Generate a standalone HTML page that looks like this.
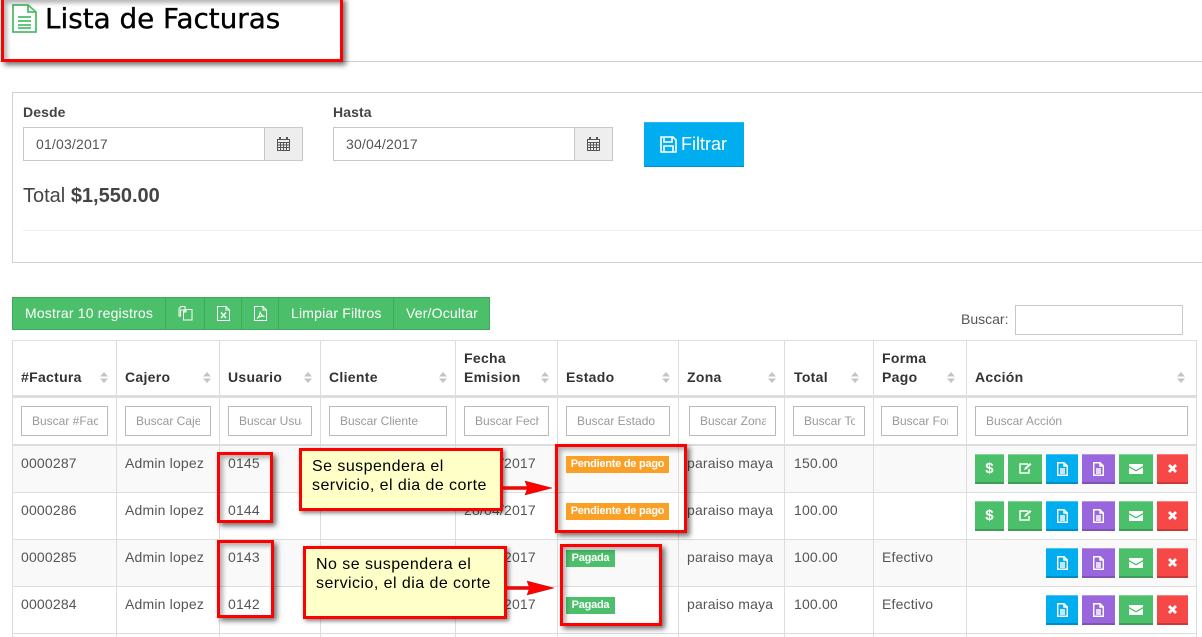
<!DOCTYPE html>
<html lang="es"><head><meta charset="utf-8"><title>Lista de Facturas</title>
<style>
html,body{margin:0;padding:0;background:#fff}
#p{position:relative;width:1202px;height:637px;overflow:hidden;font-family:"Liberation Sans",sans-serif;font-size:14px;color:#555;background:#fff}
#p div,#p svg{position:absolute;box-sizing:border-box}
.t{white-space:nowrap;line-height:16px;letter-spacing:.18px}
.th{font-weight:bold;color:#333;letter-spacing:.3px;white-space:nowrap;line-height:19px}
.v{background:#ddd;width:1px;top:340px;height:297px}
.h{background:#ddd;left:12px;width:1185px}
.f{top:406px;height:30px;border:1px solid #bbb;background:#fff;color:#999;font-size:12px;line-height:28px;padding-left:10px;overflow:hidden;white-space:nowrap}
.f span{display:block;overflow:hidden}
.r{border:3px solid #f00;box-shadow:3px 3px 5px rgba(0,0,0,.55),inset 3px 3px 5px rgba(0,0,0,.3)}
.c{background:#ffffc8;border:3px solid #f00;box-shadow:2px 2px 4px rgba(0,0,0,.5);color:#000;font-size:16px;line-height:19px;letter-spacing:.45px;white-space:nowrap}
.l{height:17px;color:#fff;font-size:11px;font-weight:bold;line-height:17px;text-align:center;white-space:nowrap;letter-spacing:-.25px}
.b{width:32px;height:30px;border-top:1px solid rgba(255,255,255,.3);border-bottom:2px solid rgba(0,0,0,.18)}
.g{background:#4cbf6a}.u{background:#00adee}.m{background:#9966dd}.x{background:#f64846}
.ic{fill:none;stroke:#fff;stroke-width:1.5}
.sep{top:297px;height:33px;width:1px;background:#3fa85c}
.sort{width:8px;height:11px}
</style></head><body><div id="p">

<!-- Encabezado -->
<svg style="left:12px;top:4px" width="25" height="29" viewBox="0 0 25 29"><path d="M1 1H16L24 8V28H1Z M16 1V8H24" fill="#fff" stroke="#4cbf6a" stroke-width="1.8"/><path d="M6 13H19M6 17H19M6 21H19M6 24H19" stroke="#4cbf6a" stroke-width="1.8"/></svg>
<div class="t" style="left:45px;top:3px;font-family:'DejaVu Sans',sans-serif;font-size:27.8px;line-height:32px;color:#000;letter-spacing:0;-webkit-text-stroke:.35px #000">Lista de Facturas</div>
<div style="left:0;top:61px;width:1202px;height:1px;background:#ccd3d2"></div>
<div class="r" style="left:1px;top:-3px;width:342px;height:65px"></div>

<!-- Panel -->
<div style="left:12px;top:92px;width:1200px;height:171px;border:1px solid #ccd3d2"></div>
<div class="t" style="left:23px;top:104px;font-weight:bold;color:#444;letter-spacing:.1px">Desde</div>
<div class="t" style="left:333px;top:104px;font-weight:bold;color:#444;letter-spacing:.1px">Hasta</div>

<div style="left:23px;top:127px;width:280px;height:34px;border:1px solid #c4c9c8;background:#fff"></div>
<div style="left:264px;top:127px;width:39px;height:34px;border:1px solid #c4c9c8;background:#eee"></div>
<div class="t" style="left:36px;top:136px;color:#555">01/03/2017</div>
<svg style="left:277px;top:137px" width="13" height="14" viewBox="0 0 13 14"><path d="M.5 2.5H12.5V13.5H.5ZM.5 5.5H12.5M.5 8H12.5M.5 10.5H12.5M3.5 5.5V13.5M6.5 5.5V13.5M9.5 5.5V13.5" fill="none" stroke="#555"/><path d="M3 0V3M10 0V3" stroke="#555" stroke-width="2"/></svg>

<div style="left:333px;top:127px;width:280px;height:34px;border:1px solid #c4c9c8;background:#fff"></div>
<div style="left:574px;top:127px;width:39px;height:34px;border:1px solid #c4c9c8;background:#eee"></div>
<div class="t" style="left:346px;top:136px;color:#555">30/04/2017</div>
<svg style="left:587px;top:137px" width="13" height="14" viewBox="0 0 13 14"><path d="M.5 2.5H12.5V13.5H.5ZM.5 5.5H12.5M.5 8H12.5M.5 10.5H12.5M3.5 5.5V13.5M6.5 5.5V13.5M9.5 5.5V13.5" fill="none" stroke="#555"/><path d="M3 0V3M10 0V3" stroke="#555" stroke-width="2"/></svg>

<div style="left:644px;top:122px;width:100px;height:45px;background:#00adee;border-top:1px solid #2bbdf2;border-bottom:1px solid #0090c8"></div>
<svg style="left:660px;top:136px" width="17" height="17" viewBox="0 0 17 17"><path d="M1 1H13L16 4V16H1Z" fill="none" stroke="#fff" stroke-width="1.6"/><path d="M4 1V6H12V1M4 16V10H13V16" fill="none" stroke="#fff" stroke-width="1.6"/></svg>
<div class="t" style="left:681px;top:135px;color:#fff;font-size:18px;line-height:18px;letter-spacing:0">Filtrar</div>

<div class="t" style="left:23px;top:184px;font-size:20px;line-height:24px;color:#444;letter-spacing:0">Total <b>$1,550.00</b></div>
<div style="left:23px;top:230px;width:1179px;height:1px;background:#eee"></div>

<!-- Barra -->
<div style="left:12px;top:297px;width:478px;height:33px;background:#4cbf6a;border:1px solid #3fa85c"></div>
<div class="sep" style="left:165px"></div><div class="sep" style="left:204px"></div><div class="sep" style="left:241px"></div><div class="sep" style="left:278px"></div><div class="sep" style="left:393px"></div>
<div class="t" style="left:25px;top:305px;color:#fff">Mostrar 10 registros</div>
<svg style="left:178px;top:306px" width="15" height="15" viewBox="0 0 15 15"><path d="M1 2.5L3 .5H7V4H2.5V10H1ZM5.5 5.5L8 3.5H14V14H5.5Z M8 3.5V6H5.5" fill="#4cbf6a" stroke="#fff"/></svg>
<svg style="left:217px;top:306px" width="13" height="15" viewBox="0 0 13 15"><path d="M.5 .5H9L12.500 4V14.500H.5ZM9 .5V4H12.500" fill="none" stroke="#fff"/><path d="M4 6.500L9 12M9 6.500L4 12" stroke="#fff" stroke-width="1.400"/></svg>
<svg style="left:254px;top:306px" width="13" height="15" viewBox="0 0 13 15"><path d="M.5 .5H9L12.500 4V14.500H.5ZM9 .5V4H12.500" fill="none" stroke="#fff"/><path d="M3 12.500C5 11 6.500 7.500 6 5.500C6.500 8 8 10 10.500 10.500C8 10 5 10.500 3 12.500Z" fill="none" stroke="#fff" stroke-width="1"/></svg>
<div class="t" style="left:291px;top:305px;color:#fff">Limpiar Filtros</div>
<div class="t" style="left:406px;top:305px;color:#fff">Ver/Ocultar</div>

<div class="t" style="left:961px;top:311px;color:#555;letter-spacing:0">Buscar:</div>
<div style="left:1015px;top:305px;width:168px;height:30px;border:1px solid #c4c9c8;background:#fff"></div>

<!-- Fondos de filas -->
<div style="left:12px;top:445px;width:1185px;height:47px;background:#f9f9f9"></div>
<div style="left:12px;top:540px;width:1185px;height:46px;background:#f9f9f9"></div>

<!-- Líneas de tabla -->
<div class="h" style="top:340px;height:1px"></div>
<div class="h" style="top:395px;height:3px;background:#ddd"></div>
<div class="h" style="top:444px;height:2px"></div>
<div class="h" style="top:492px;height:1px"></div>
<div class="h" style="top:539px;height:1px"></div>
<div class="h" style="top:586px;height:1px"></div>
<div class="h" style="top:633px;height:1px"></div>
<div class="v" style="left:12px"></div><div class="v" style="left:116px"></div><div class="v" style="left:219px"></div><div class="v" style="left:320px"></div><div class="v" style="left:455px"></div><div class="v" style="left:557px"></div><div class="v" style="left:678px"></div><div class="v" style="left:784px"></div><div class="v" style="left:873px"></div><div class="v" style="left:966px"></div><div class="v" style="left:1196px"></div>

<!-- Encabezados -->
<div class="th" style="left:21px;top:368px">#Factura</div>
<div class="th" style="left:125px;top:368px">Cajero</div>
<div class="th" style="left:228px;top:368px">Usuario</div>
<div class="th" style="left:329px;top:368px">Cliente</div>
<div class="th" style="left:464px;top:349px">Fecha<br>Emision</div>
<div class="th" style="left:566px;top:368px">Estado</div>
<div class="th" style="left:687px;top:368px">Zona</div>
<div class="th" style="left:794px;top:368px">Total</div>
<div class="th" style="left:882px;top:349px">Forma<br>Pago</div>
<div class="th" style="left:975px;top:368px">Acción</div>

<svg class="sort" style="left:100px;top:372px" viewBox="0 0 8 11"><path d="M4 0L8 4.500H0ZM0 6.500H8L4 11Z" fill="#c4c4c4"/></svg>
<svg class="sort" style="left:203px;top:372px" viewBox="0 0 8 11"><path d="M4 0L8 4.500H0ZM0 6.500H8L4 11Z" fill="#c4c4c4"/></svg>
<svg class="sort" style="left:304px;top:372px" viewBox="0 0 8 11"><path d="M4 0L8 4.500H0ZM0 6.500H8L4 11Z" fill="#c4c4c4"/></svg>
<svg class="sort" style="left:439px;top:372px" viewBox="0 0 8 11"><path d="M4 0L8 4.500H0ZM0 6.500H8L4 11Z" fill="#c4c4c4"/></svg>
<svg class="sort" style="left:541px;top:372px" viewBox="0 0 8 11"><path d="M4 0L8 4.500H0ZM0 6.500H8L4 11Z" fill="#c4c4c4"/></svg>
<svg class="sort" style="left:662px;top:372px" viewBox="0 0 8 11"><path d="M4 0L8 4.500H0ZM0 6.500H8L4 11Z" fill="#c4c4c4"/></svg>
<svg class="sort" style="left:768px;top:372px" viewBox="0 0 8 11"><path d="M4 0L8 4.500H0ZM0 6.500H8L4 11Z" fill="#c4c4c4"/></svg>
<svg class="sort" style="left:851px;top:372px" viewBox="0 0 8 11"><path d="M4 0L8 4.500H0ZM0 6.500H8L4 11Z" fill="#c4c4c4"/></svg>
<svg class="sort" style="left:947px;top:372px" viewBox="0 0 8 11"><path d="M4 0L8 4.500H0ZM0 6.500H8L4 11Z" fill="#c4c4c4"/></svg>
<svg class="sort" style="left:1177px;top:372px" viewBox="0 0 8 11"><path d="M4 0L8 4.500H0ZM0 6.500H8L4 11Z" fill="#c4c4c4"/></svg>

<!-- Filtros -->
<div class="f" style="left:21px;width:87px"><span style="width:66px">Buscar #Factura</span></div>
<div class="f" style="left:125px;width:86px"><span style="width:64px">Buscar Cajero</span></div>
<div class="f" style="left:228px;width:84px"><span style="width:63px">Buscar Usuario</span></div>
<div class="f" style="left:329px;width:118px"><span style="width:97px">Buscar Cliente</span></div>
<div class="f" style="left:464px;width:85px"><span style="width:64px">Buscar Fecha</span></div>
<div class="f" style="left:566px;width:104px"><span style="width:83px">Buscar Estado</span></div>
<div class="f" style="left:689px;width:87px"><span style="width:66px">Buscar Zona</span></div>
<div class="f" style="left:793px;width:72px"><span style="width:51px">Buscar Total</span></div>
<div class="f" style="left:881px;width:77px"><span style="width:56px">Buscar Forma</span></div>
<div class="f" style="left:975px;width:213px"><span>Buscar Acción</span></div>

<!-- Fila 1 -->
<div class="t" style="left:21px;top:455px">0000287</div><div class="t" style="left:125px;top:455px">Admin lopez</div><div class="t" style="left:228px;top:455px">0145</div><div class="t" style="left:464px;top:455px">28/04/2017</div><div class="t" style="left:687px;top:455px">paraiso maya</div><div class="t" style="left:794px;top:455px">150.00</div>
<!-- Fila 2 -->
<div class="t" style="left:21px;top:502px">0000286</div><div class="t" style="left:125px;top:502px">Admin lopez</div><div class="t" style="left:228px;top:502px">0144</div><div class="t" style="left:464px;top:502px">28/04/2017</div><div class="t" style="left:687px;top:502px">paraiso maya</div><div class="t" style="left:794px;top:502px">100.00</div>
<!-- Fila 3 -->
<div class="t" style="left:21px;top:549px">0000285</div><div class="t" style="left:125px;top:549px">Admin lopez</div><div class="t" style="left:228px;top:549px">0143</div><div class="t" style="left:464px;top:549px">28/04/2017</div><div class="t" style="left:687px;top:549px">paraiso maya</div><div class="t" style="left:794px;top:549px">100.00</div><div class="t" style="left:882px;top:549px">Efectivo</div>
<!-- Fila 4 -->
<div class="t" style="left:21px;top:596px">0000284</div><div class="t" style="left:125px;top:596px">Admin lopez</div><div class="t" style="left:228px;top:596px">0142</div><div class="t" style="left:464px;top:596px">28/04/2017</div><div class="t" style="left:687px;top:596px">paraiso maya</div><div class="t" style="left:794px;top:596px">100.00</div><div class="t" style="left:882px;top:596px">Efectivo</div>

<!-- Etiquetas -->
<div class="l" style="left:566px;top:456px;width:103px;background:#fba026">Pendiente de pago</div>
<div class="l" style="left:566px;top:503px;width:103px;background:#fba026">Pendiente de pago</div>
<div class="l" style="left:566px;top:550px;width:49px;background:#4cbf6a">Pagada</div>
<div class="l" style="left:566px;top:597px;width:49px;background:#4cbf6a">Pagada</div>

<!-- Botones fila 1 -->
<div class="b g" style="left:975px;top:454px;width:29px"></div><div class="t" style="left:975px;top:461px;width:29px;text-align:center;color:#fff;font-weight:bold;font-size:15px">$</div>
<div class="b g" style="left:1008px;top:454px;width:34px"></div><svg class="ic" style="left:1019px;top:462px" width="13" height="12" viewBox="0 0 13 12"><path d="M9 2H1V11H10V7"/><path d="M5 8L6 5.5L11 1L12.5 2.5L7.5 7Z" fill="#fff" stroke="none"/></svg>
<div class="b u" style="left:1046px;top:454px"></div><svg class="ic" style="left:1057px;top:462px" width="11" height="14" viewBox="0 0 11 14"><path d="M.7 .7H7L10.3 4V13.3H.7ZM7 .7V4H10.3M3 7H8M3 9H8M3 11H8"/></svg>
<div class="b m" style="left:1082px;top:454px;width:33px"></div><svg class="ic" style="left:1093px;top:462px" width="11" height="14" viewBox="0 0 11 14"><path d="M.7 .7H7L10.3 4V13.3H.7ZM7 .7V4H10.3M3 7H8M3 9H8M3 11H8"/></svg>
<div class="b g" style="left:1119px;top:454px;width:34px"></div><svg style="left:1129px;top:464px" width="14" height="10" viewBox="0 0 14 10"><path d="M0 0H14V2L7 6L0 2ZM0 3.5L7 7.5L14 3.5V10H0Z" fill="#fff"/></svg>
<div class="b x" style="left:1157px;top:454px;width:31px"></div><svg style="left:1168px;top:464px" width="9" height="9" viewBox="0 0 9 9"><path d="M1 1L8 8M8 1L1 8" stroke="#fff" stroke-width="2.8"/></svg>
<!-- Botones fila 2 -->
<div class="b g" style="left:975px;top:501px;width:29px"></div><div class="t" style="left:975px;top:508px;width:29px;text-align:center;color:#fff;font-weight:bold;font-size:15px">$</div>
<div class="b g" style="left:1008px;top:501px;width:34px"></div><svg class="ic" style="left:1019px;top:509px" width="13" height="12" viewBox="0 0 13 12"><path d="M9 2H1V11H10V7"/><path d="M5 8L6 5.5L11 1L12.5 2.5L7.5 7Z" fill="#fff" stroke="none"/></svg>
<div class="b u" style="left:1046px;top:501px"></div><svg class="ic" style="left:1057px;top:509px" width="11" height="14" viewBox="0 0 11 14"><path d="M.7 .7H7L10.3 4V13.3H.7ZM7 .7V4H10.3M3 7H8M3 9H8M3 11H8"/></svg>
<div class="b m" style="left:1082px;top:501px;width:33px"></div><svg class="ic" style="left:1093px;top:509px" width="11" height="14" viewBox="0 0 11 14"><path d="M.7 .7H7L10.3 4V13.3H.7ZM7 .7V4H10.3M3 7H8M3 9H8M3 11H8"/></svg>
<div class="b g" style="left:1119px;top:501px;width:34px"></div><svg style="left:1129px;top:511px" width="14" height="10" viewBox="0 0 14 10"><path d="M0 0H14V2L7 6L0 2ZM0 3.5L7 7.5L14 3.5V10H0Z" fill="#fff"/></svg>
<div class="b x" style="left:1157px;top:501px;width:31px"></div><svg style="left:1168px;top:511px" width="9" height="9" viewBox="0 0 9 9"><path d="M1 1L8 8M8 1L1 8" stroke="#fff" stroke-width="2.8"/></svg>
<!-- Botones fila 3 -->
<div class="b u" style="left:1046px;top:548px"></div><svg class="ic" style="left:1057px;top:556px" width="11" height="14" viewBox="0 0 11 14"><path d="M.7 .7H7L10.3 4V13.3H.7ZM7 .7V4H10.3M3 7H8M3 9H8M3 11H8"/></svg>
<div class="b m" style="left:1082px;top:548px;width:33px"></div><svg class="ic" style="left:1093px;top:556px" width="11" height="14" viewBox="0 0 11 14"><path d="M.7 .7H7L10.3 4V13.3H.7ZM7 .7V4H10.3M3 7H8M3 9H8M3 11H8"/></svg>
<div class="b g" style="left:1119px;top:548px;width:34px"></div><svg style="left:1129px;top:558px" width="14" height="10" viewBox="0 0 14 10"><path d="M0 0H14V2L7 6L0 2ZM0 3.5L7 7.5L14 3.5V10H0Z" fill="#fff"/></svg>
<div class="b x" style="left:1157px;top:548px;width:31px"></div><svg style="left:1168px;top:558px" width="9" height="9" viewBox="0 0 9 9"><path d="M1 1L8 8M8 1L1 8" stroke="#fff" stroke-width="2.8"/></svg>
<!-- Botones fila 4 -->
<div class="b u" style="left:1046px;top:595px"></div><svg class="ic" style="left:1057px;top:603px" width="11" height="14" viewBox="0 0 11 14"><path d="M.7 .7H7L10.3 4V13.3H.7ZM7 .7V4H10.3M3 7H8M3 9H8M3 11H8"/></svg>
<div class="b m" style="left:1082px;top:595px;width:33px"></div><svg class="ic" style="left:1093px;top:603px" width="11" height="14" viewBox="0 0 11 14"><path d="M.7 .7H7L10.3 4V13.3H.7ZM7 .7V4H10.3M3 7H8M3 9H8M3 11H8"/></svg>
<div class="b g" style="left:1119px;top:595px;width:34px"></div><svg style="left:1129px;top:605px" width="14" height="10" viewBox="0 0 14 10"><path d="M0 0H14V2L7 6L0 2ZM0 3.5L7 7.5L14 3.5V10H0Z" fill="#fff"/></svg>
<div class="b x" style="left:1157px;top:595px;width:31px"></div><svg style="left:1168px;top:605px" width="9" height="9" viewBox="0 0 9 9"><path d="M1 1L8 8M8 1L1 8" stroke="#fff" stroke-width="2.8"/></svg>

<!-- Anotaciones -->
<div class="r" style="left:217px;top:452px;width:56px;height:71px"></div>
<div class="r" style="left:217px;top:540px;width:57px;height:78px"></div>
<div class="r" style="left:555px;top:444px;width:132px;height:89px"></div>
<div class="r" style="left:560px;top:544px;width:102px;height:82px"></div>

<div class="c" style="left:299px;top:448px;width:204px;height:63px;padding:6px 0 0 10px">Se suspendera el<br>servicio, el dia de corte</div>
<div class="c" style="left:303px;top:546px;width:204px;height:73px;padding:6px 0 0 10px">No se suspendera el<br>servicio, el dia de corte</div>

<svg style="left:503px;top:480px" width="52" height="16" viewBox="0 0 52 16"><path d="M0 6.5H24L22 1L49 8L22 15L24 9.5H0Z" fill="#f00" stroke="#a00" stroke-width=".4"/></svg>
<svg style="left:507px;top:580px" width="50" height="16" viewBox="0 0 50 16"><path d="M0 6.5H22L20 1L47 8L20 15L22 9.5H0Z" fill="#f00" stroke="#a00" stroke-width=".4"/></svg>

</div></body></html>
